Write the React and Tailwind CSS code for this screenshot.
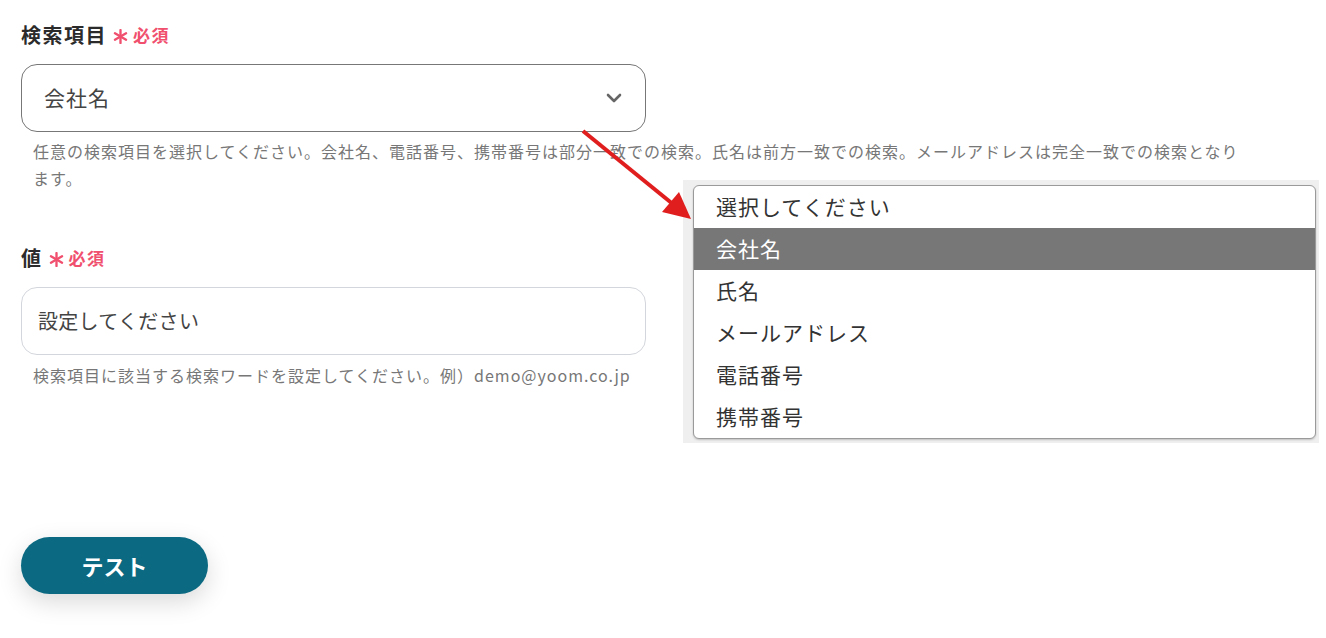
import React from "react";

const jp = { fontFamily: '"Noto Sans CJK JP", "Noto Sans", sans-serif' };

function Required() {
  return (
    <span className="flex items-center gap-[5px] text-[#f0506e] font-bold">
      <svg width="15" height="15" viewBox="0 0 14 14" className="mt-[3px]">
        <g stroke="#f0506e" strokeWidth="2.2" strokeLinecap="round">
          <line x1="7" y1="1" x2="7" y2="13" />
          <line x1="1.8" y1="4" x2="12.2" y2="10" />
          <line x1="1.8" y1="10" x2="12.2" y2="4" />
        </g>
      </svg>
      <span className="text-[17px] tracking-[1.5px]">必須</span>
    </span>
  );
}

export default function App() {
  const items = ["選択してください", "会社名", "氏名", "メールアドレス", "電話番号", "携帯番号"];
  return (
    <div className="relative w-[1326px] h-[638px] bg-white overflow-hidden" style={jp}>
      <div className="pl-[21px] pt-[21px] flex flex-col items-start">
        <div className="h-[28px] flex items-center gap-[6px]">
          <span className="text-[20px] tracking-[1.5px] font-bold text-[#2b2b2b]">検索項目</span>
          <Required />
        </div>
        <div className="mt-[15px] w-[625px] h-[68px] border border-[#777] rounded-[16px] flex items-center justify-between pl-[22px] pr-[22px]">
          <span className="text-[21px] tracking-[1px] text-[#444]">会社名</span>
          <svg width="18" height="12" viewBox="0 0 18 12">
            <polyline points="3,3 9,9 15,3" fill="none" stroke="#666" strokeWidth="2.6" strokeLinecap="round" strokeLinejoin="round" />
          </svg>
        </div>
        <p className="mt-[6px] ml-[12px] w-[1215px] text-[16px] tracking-[1px] leading-[27px] text-[#777]">
          任意の検索項目を選択してください。会社名、電話番号、携帯番号は部分一致での検索。氏名は前方一致での検索。メールアドレスは完全一致での検索となります。
        </p>
        <div className="mt-[52px] h-[28px] flex items-center gap-[6px]">
          <span className="text-[20px] tracking-[1.5px] font-bold text-[#2b2b2b]">値</span>
          <Required />
        </div>
        <div className="mt-[15px] w-[625px] h-[68px] border border-[#d3d6dc] rounded-[16px] flex items-center pl-[16px]">
          <span className="text-[20px] tracking-[0.3px] text-[#444]">設定してください</span>
        </div>
        <p className="mt-[7px] ml-[12px] text-[16px] tracking-[1px] leading-[27px] text-[#777]">
          検索項目に該当する検索ワードを設定してください。例）demo@yoom.co.jp
        </p>
        <button className="mt-[148px] w-[187px] h-[57px] rounded-full bg-[#0b6a82] text-white text-[22px] font-bold shadow-[0_8px_24px_rgba(0,0,0,0.15)]">
          テスト
        </button>
      </div>

      {/* dropdown overlay */}
      <div className="absolute left-[683px] top-[180px] w-[636px] h-[263px] bg-[#efefef] pl-[10px] pt-[5px]">
        <div className="w-[623px] h-[254px] bg-white border border-[#9a9a9a] rounded-[6px] overflow-hidden shadow-[0_1px_2px_rgba(0,0,0,0.2)]">
          {items.map((t, i) => (
            <div
              key={t}
              className={
                i === 1
                  ? "h-[42px] flex items-center pl-[22px] text-[21px] tracking-[1px] bg-[#777777] text-white"
                  : "h-[42px] flex items-center pl-[22px] text-[21px] tracking-[1px] text-[#333]"
              }
            >
              {t}
            </div>
          ))}
        </div>
      </div>

      {/* red arrow */}
      <svg className="absolute left-0 top-0 pointer-events-none" width="1326" height="638">
        <line x1="583" y1="131" x2="674" y2="205" stroke="#e01e1e" strokeWidth="4" />
        <polygon points="691,219 662,212 679,192" fill="#e01e1e" />
      </svg>
    </div>
  );
}
